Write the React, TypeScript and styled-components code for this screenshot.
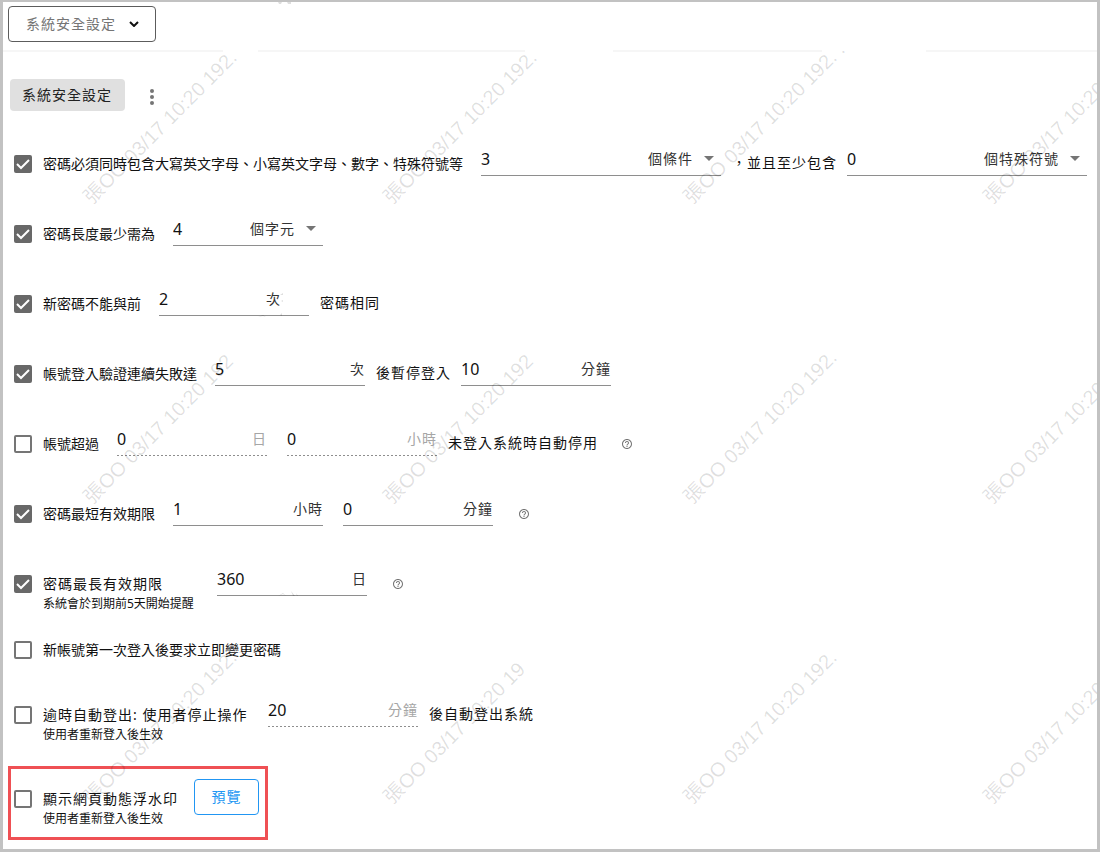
import React, { useState } from 'react';
import styled, { createGlobalStyle, css } from 'styled-components';

const GlobalStyle = createGlobalStyle`
  body {
    margin: 0;
    background: #fff;
    color: #111;
    font-family: 'Noto Sans', 'Noto Sans CJK TC', sans-serif;
    font-size: 14px;
    line-height: 20px;
  }
  *, *::before, *::after { box-sizing: border-box; }
`;

const Frame = styled.div`
  position: relative;
  min-height: 100vh;
  padding-bottom: 9px;
  border: 3px solid #c2c2c2;
  border-top-width: 2px;
  overflow: hidden;
`;

const Header = styled.header`
  display: flex;
  align-items: flex-start;
  height: 50px;
  padding: 4px 5px 0;
  background: linear-gradient(
      to right,
      #f6f6f6 220px,
      #fff 220px 255px,
      #f6f6f6 255px 522px,
      #fff 522px 610px,
      #f6f6f6 610px 819px,
      #fff 819px 923px,
      #f6f6f6 923px
    )
    bottom / 100% 2px no-repeat;
`;

const Picker = styled.span`
  display: inline-grid;
  align-items: center;
  justify-items: end;

  > * {
    grid-area: 1 / 1;
  }
  > svg {
    pointer-events: none;
  }
`;

const selectReset = css`
  appearance: none;
  margin: 0;
  background: transparent;
  font: inherit;
  font-size: 14px;
  letter-spacing: 1px;
  cursor: pointer;
`;

const PageSelect = styled.select`
  ${selectReset}
  width: 148px;
  height: 36px;
  padding: 0 32px 0 17px;
  border: 1px solid #5c5c5c;
  border-radius: 4px;
  color: #757575;
`;

const PageChevron = styled.svg`
  margin-right: 17px;
`;

const Toolbar = styled.div`
  display: flex;
  align-items: center;
  gap: 22px;
  padding: 27px 7px 18px;
`;

const SectionButton = styled.button`
  height: 32px;
  padding: 0 13px 0 12px;
  border: 0;
  border-radius: 4px;
  background: #e0e0e0;
  color: #222;
  font: inherit;
  letter-spacing: 1px;
  cursor: pointer;
`;

const MenuButton = styled.button`
  display: flex;
  padding: 4px 0 0;
  border: 0;
  background: none;
  cursor: pointer;
`;

const Row = styled.div<{ $height?: number }>`
  display: flex;
  align-items: center;
  min-height: ${(p) => p.$height ?? 70}px;
  padding-left: 11px;
  white-space: nowrap;
`;

const HighlightRow = styled.div`
  display: flex;
  align-items: center;
  width: fit-content;
  margin: 17px 0 0 5px;
  padding: 0 6px 8px 3px;
  border: 3px solid #ef5054;
  white-space: nowrap;
`;

const CheckLabel = styled.label`
  display: flex;
  align-items: center;
  gap: 11px;
  cursor: pointer;
`;

const TickBox = styled.span`
  display: grid;
  place-items: center;
  flex: none;

  > * {
    grid-area: 1 / 1;
  }
  > svg {
    pointer-events: none;
  }
`;

const TickInput = styled.input`
  appearance: none;
  width: 18px;
  height: 18px;
  margin: 0;
  border: 2px solid #757575;
  border-radius: 2px;
  cursor: pointer;

  &:checked {
    border-color: #686868;
    background: #686868;
  }
`;

const LabelStack = styled.span<{ $minWidth?: number }>`
  display: grid;
  min-width: ${(p) => p.$minWidth ?? 0}px;
  padding-top: 20px;
`;

const LabelText = styled.span<{ $spaced?: boolean }>`
  letter-spacing: ${(p) => (p.$spaced ? '1px' : 'normal')};
`;

const Caption = styled.span`
  font-size: 12px;
`;

const Fields = styled.div<{ $gap?: number }>`
  display: flex;
  align-items: center;
  gap: ${(p) => p.$gap ?? 10}px;
  margin-left: 18px;
`;

const Phrase = styled.span`
  padding: 0 0 2px 1px;
  letter-spacing: 1px;
`;

const FieldBox = styled.span<{ $wide?: boolean; $disabled?: boolean }>`
  display: flex;
  align-items: center;
  width: ${(p) => (p.$wide ? 240 : 150)}px;
  height: 32px;
  margin-bottom: 8px;
  padding-bottom: 3px;
  background: ${(p) =>
      p.$disabled
        ? 'repeating-linear-gradient(to right, #8e8e8e 0 2px, transparent 2px 4px)'
        : 'linear-gradient(#8e8e8e, #8e8e8e)'}
    bottom / 100% 1px no-repeat;
`;

const ValueInput = styled.input`
  flex: 1;
  min-width: 0;
  padding: 0;
  border: 0;
  outline: 0;
  background: transparent;
  color: #111;
  font: inherit;
  font-size: 16px;
`;

const Unit = styled.span<{ $inset?: boolean; $disabled?: boolean }>`
  padding-right: ${(p) => (p.$inset ? 28 : 0)}px;
  color: ${(p) => (p.$disabled ? '#a6a6a6' : '#333')};
  letter-spacing: 1px;
`;

const UnitSelect = styled.select`
  ${selectReset}
  padding: 0 28px 0 0;
  border: 0;
  color: #333;
`;

const UnitArrow = styled.svg`
  margin-right: 7px;
`;

const HelpButton = styled.button<{ $inset: number }>`
  display: flex;
  margin-left: ${(p) => p.$inset}px;
  padding: 0;
  border: 0;
  background: none;
  cursor: help;
`;

const PreviewButton = styled.button`
  width: 65px;
  height: 36px;
  margin: 0 0 4px 16px;
  padding: 0;
  border: 1px solid #2196f3;
  border-radius: 4px;
  background: transparent;
  color: #2196f3;
  font: inherit;
  letter-spacing: 1px;
  cursor: pointer;
`;

const WatermarkLayer = styled.svg`
  position: absolute;
  inset: 0;
  width: 100%;
  height: 100%;
  pointer-events: none;
  font-family: 'Liberation Sans', 'Noto Sans CJK TC', sans-serif;
  font-size: 20px;
  fill: rgba(0, 0, 0, 0.13);
`;

function Tick({ id, on }: { id: string; on?: boolean }) {
  const [checked, setChecked] = useState(!!on);
  return (
    <TickBox>
      <TickInput id={id} type="checkbox" checked={checked} onChange={() => setChecked(!checked)} />
      {checked && (
        <svg width="18" height="18" viewBox="0 0 18 18" fill="none" stroke="#fff" strokeWidth="2">
          <path d="M3 9l4 4 8-8" />
        </svg>
      )}
    </TickBox>
  );
}

interface CheckProps {
  id: string;
  text: string;
  on?: boolean;
  spaced?: boolean;
  caption?: string;
  minWidth?: number;
}

function Check({ id, text, on, spaced, caption, minWidth }: CheckProps) {
  const label = <LabelText $spaced={spaced}>{text}</LabelText>;
  return (
    <CheckLabel htmlFor={id}>
      <Tick id={id} on={on} />
      {caption ? (
        <LabelStack $minWidth={minWidth}>
          {label}
          <Caption>{caption}</Caption>
        </LabelStack>
      ) : (
        label
      )}
    </CheckLabel>
  );
}

interface FieldProps {
  name: string;
  value: string;
  unit: string;
  select?: boolean;
  inset?: boolean;
  wide?: boolean;
  disabled?: boolean;
}

function Field({ name, value, unit, select, inset, wide, disabled }: FieldProps) {
  return (
    <FieldBox $wide={wide} $disabled={disabled}>
      <ValueInput aria-label={name} defaultValue={value} disabled={disabled} />
      {select ? (
        <Picker>
          <UnitSelect aria-label={`${name}單位`}>
            <option>{unit}</option>
          </UnitSelect>
          <UnitArrow width="10" height="5" viewBox="0 0 10 5">
            <path d="M0 0h10L5 5z" fill="#757575" />
          </UnitArrow>
        </Picker>
      ) : (
        <Unit $inset={inset} $disabled={disabled}>
          {unit}
        </Unit>
      )}
    </FieldBox>
  );
}

function Help({ inset = 26 }: { inset?: number }) {
  return (
    <HelpButton $inset={inset} type="button" aria-label="說明">
      <svg width="10" height="10" viewBox="0 0 20 20">
        <path
          fill="#757575"
          d="M9 16h2v-2H9v2zm1-16C4.480 0 0 4.480 0 10s4.480 10 10 10 10-4.480 10-10S15.520 0 10 0zm0 18c-4.410 0-8-3.590-8-8s3.590-8 8-8 8 3.590 8 8-3.590 8-8 8zm0-14c-2.210 0-4 1.790-4 4h2c0-1.100.9-2 2-2s2 .9 2 2c0 2-3 1.750-3 5h2c0-2.250 3-2.500 3-5 0-2.210-1.790-4-4-4z"
        />
      </svg>
    </HelpButton>
  );
}

const TILE = 300;
const stamps = [
  ['192.', '192.', '192. .', '192.'],
  ['192', '192', '192.', '192.'],
  ['192.', '19', '192.', '192.'],
];

function Watermark() {
  return (
    <WatermarkLayer aria-hidden="true">
      {stamps.map((line, row) =>
        line.map((tail, col) => (
          <text
            key={`${row}-${col}`}
            transform={`translate(${89 + col * TILE} ${203 + row * TILE}) rotate(-45)`}
          >
            {`張OO 03/17 10:20 ${tail}`}
          </text>
        )),
      )}
      <path d="M275 0h4l-1 2h-2zM284 0h4v2h-3zM255 315l5-2 3 2-3-1zM277 313l2-2v3zM275 594l5-3 3 3-3-2zM288 589l4 5h-2zM293 591l2 3h-1zM277 293l3-2v2zM278 299l2-1v2zM236 650l3-1-2 2z" />
    </WatermarkLayer>
  );
}

export default function App() {
  return (
    <Frame>
      <GlobalStyle />
      <Header>
        <Picker>
          <PageSelect aria-label="設定頁面">
            <option>系統安全設定</option>
          </PageSelect>
          <PageChevron width="10" height="6" viewBox="0 0 10 6" fill="none" stroke="#111" strokeWidth="2">
            <path d="M1 1l4 4 4-4" />
          </PageChevron>
        </Picker>
      </Header>

      <main>
        <Toolbar>
          <SectionButton type="button">系統安全設定</SectionButton>
          <MenuButton type="button" aria-label="更多">
            <svg width="10" height="16" viewBox="0 0 10 16" fill="#757575">
              <circle cx="5" cy="2" r="2" />
              <circle cx="5" cy="8" r="2" />
              <circle cx="5" cy="14" r="2" />
            </svg>
          </MenuButton>
        </Toolbar>

        <Row>
          <Check id="complexity" on text="密碼必須同時包含大寫英文字母、小寫英文字母、數字、特殊符號等" />
          <Fields>
            <Field name="條件數" value="3" unit="個條件" select wide />
            <Phrase>，並且至少包含</Phrase>
            <Field name="特殊符號數" value="0" unit="個特殊符號" select wide />
          </Fields>
        </Row>

        <Row>
          <Check id="length" on text="密碼長度最少需為" />
          <Fields>
            <Field name="密碼長度" value="4" unit="個字元" select />
          </Fields>
        </Row>

        <Row>
          <Check id="history" on text="新密碼不能與前" />
          <Fields>
            <Field name="歷史次數" value="2" unit="次" inset />
            <Phrase>密碼相同</Phrase>
          </Fields>
        </Row>

        <Row>
          <Check id="lockout" on text="帳號登入驗證連續失敗達" />
          <Fields>
            <Field name="失敗次數" value="5" unit="次" />
            <Phrase>後暫停登入</Phrase>
            <Field name="暫停時間" value="10" unit="分鐘" />
          </Fields>
        </Row>

        <Row>
          <Check id="inactive" text="帳號超過" />
          <Fields>
            <Field name="停用日數" value="0" unit="日" disabled />
            <span />
            <Field name="停用小時" value="0" unit="小時" disabled />
            <Phrase>未登入系統時自動停用</Phrase>
          </Fields>
          <Help inset={24} />
        </Row>

        <Row>
          <Check id="min-age" on text="密碼最短有效期限" />
          <Fields $gap={20}>
            <Field name="最短小時" value="1" unit="小時" />
            <Field name="最短分鐘" value="0" unit="分鐘" />
          </Fields>
          <Help />
        </Row>

        <Row>
          <Check
            id="max-age"
            on
            spaced
            text="密碼最長有效期限"
            caption="系統會於到期前5天開始提醒"
            minWidth={156}
          />
          <Fields>
            <Field name="最長日數" value="360" unit="日" />
          </Fields>
          <Help />
        </Row>

        <Row $height={62}>
          <Check id="first-login" text="新帳號第一次登入後要求立即變更密碼" />
        </Row>

        <Row $height={68}>
          <Check
            id="timeout"
            spaced
            text="逾時自動登出: 使用者停止操作"
            caption="使用者重新登入後生效"
            minWidth={207}
          />
          <Fields>
            <Field name="逾時分鐘" value="20" unit="分鐘" disabled />
            <Phrase>後自動登出系統</Phrase>
          </Fields>
        </Row>

        <HighlightRow>
          <Check id="watermark" spaced text="顯示網頁動態浮水印" caption="使用者重新登入後生效" />
          <PreviewButton type="button">預覽</PreviewButton>
        </HighlightRow>
      </main>

      <Watermark />
    </Frame>
  );
}
